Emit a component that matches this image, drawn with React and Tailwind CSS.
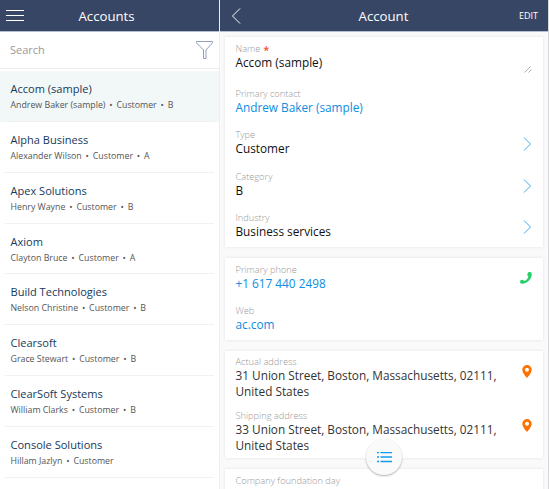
import React from "react";

const accounts = [
  ["Accom (sample)", "Andrew Baker (sample)", "Customer", "B"],
  ["Alpha Business", "Alexander Wilson", "Customer", "A"],
  ["Apex Solutions", "Henry Wayne", "Customer", "B"],
  ["Axiom", "Clayton Bruce", "Customer", "A"],
  ["Build Technologies", "Nelson Christine", "Customer", "B"],
  ["Clearsoft", "Grace Stewart", "Customer", "B"],
  ["ClearSoft Systems", "William Clarks", "Customer", "B"],
  ["Console Solutions", "Hillam Jazlyn", "Customer"],
];

function Chevron() {
  return (
    <svg className="h-[14px] w-[9px]" viewBox="0 0 9 14" fill="none" stroke="#43a9ee" strokeWidth="1">
      <path d="M1 .5 7.5 7 1 13.5" />
    </svg>
  );
}

function Pin() {
  return (
    <svg className="h-[13px] w-[10px]" viewBox="0 0 10 13" fill="#ff7200">
      <path fillRule="evenodd" d="M5 0a4.7 4.7 0 0 0-4.7 4.7C.3 8 5 13 5 13s4.7-5 4.7-8.3A4.7 4.7 0 0 0 5 0Zm0 2.7a2 2 0 1 1 0 4 2 2 0 0 1 0-4Z" />
    </svg>
  );
}

function Phone() {
  return (
    <svg className="h-[12px] w-[12px]" viewBox="0 0 12 12" fill="#27cf68">
      <path d="M8.200.4C9.200-.1 11 0 11.400.6c.8 2.800-.2 6-2.600 8.200C6.500 11 3.800 12 1 11.600.1 11.300-.1 9.400.4 8.400c.8-.9 2.700-.8 3.400.1l.8.6C6.300 8.200 7.800 6.600 8.500 4.800L7.900 4.200C7.100 3.400 7.200 1.300 8.200.4Z" />
    </svg>
  );
}

function Resize() {
  return (
    <svg className="h-[7px] w-[8px]" viewBox="0 0 8 7" fill="none" stroke="#888" strokeWidth=".7">
      <path d="M.5 6.500 6.500.5M4.500 6.500 7.500 3.500" />
    </svg>
  );
}

function Field({ label, required, children, size, tone = "text-[#111]", icon, iconPos = "top-[9px]" }) {
  return (
    <div className={"relative shrink-0 pl-[10.500px] " + size}>
      <div className="flex h-[12px] whitespace-nowrap text-[9.250px] leading-[13px] font-light text-[#999]">
        {label}
        {required && <span className="ml-[3px] h-3 text-[11px] leading-[15px] font-semibold text-[#f05030]">*</span>}
      </div>
      <div className={"text-[11.800px] leading-4 " + tone}>{children}</div>
      {icon && <div className={"absolute right-[11px] flex " + iconPos}>{icon}</div>}
    </div>
  );
}

const card = "shrink-0 bg-white shadow-[0_0_3px_rgba(0,0,0,0.1)]";

export default function App() {
  return (
    <div className="flex h-[489px] w-[549px] overflow-hidden bg-white font-['Open_Sans',sans-serif]">
      <section className="flex w-[219px] shrink-0 flex-col">
        <header className="flex h-8 shrink-0 items-center border-b border-[#b6bed2] bg-[#384665] pl-[6px] text-white">
          <svg className="h-[11px] w-[18px]" viewBox="0 0 18 11" stroke="#fff" strokeWidth="1">
            <path d="M0 .5H18M0 5.500H18M0 10.500H18" />
          </svg>
          <h1 className="ml-[54.500px] text-[13.200px] leading-[18px] font-medium">Accounts</h1>
        </header>
        <div className="flex h-[37px] shrink-0 items-center justify-between border-b border-[#ececec] pr-[6px] pl-[10px]">
          <span className="text-[11px] text-[#999]">Search</span>
          <svg className="h-[18px] w-[17px]" viewBox="0 0 17 18" fill="none" stroke="#8f9fbb" strokeWidth="1">
            <path d="M.5.5h16v1.300L10 9v8.500H7.500V9L.5 1.800Z" strokeLinejoin="round" />
          </svg>
        </div>
        <div className="mt-[2px] flex flex-col">
          {accounts.map(([name, ...details], i) => (
            <div key={name} className={"h-[50.860px] shrink-0 px-[5px] " + (i === 0 ? "bg-[#f2f7f8]" : "")}>
              <div className="flex h-full flex-col border-b border-[#f1f1f1] pt-[10px] pl-[5.500px]">
                <div className="text-[11.050px] leading-4 text-[#153a5b]">{name}</div>
                <div className="flex text-[8.800px] leading-[16px] text-[#555]">
                  {details.map((detail, j) => (
                    <React.Fragment key={j}>
                      {j > 0 && <span className="w-[11px] text-center">•</span>}
                      <span>{detail}</span>
                    </React.Fragment>
                  ))}
                </div>
              </div>
            </div>
          ))}
        </div>
      </section>
      <section className="relative flex w-[330px] flex-col overflow-hidden border-r border-l border-r-[#d7d7d9] border-l-[#eee] bg-[#fafafa]">
        <header className="flex h-8 shrink-0 items-center justify-between border-b border-[#b6bed2] bg-[#384665] pr-[10px] pl-[11px] text-white">
          <svg className="h-4 w-[10px]" viewBox="0 0 10 16" fill="none" stroke="#fff" strokeWidth="1">
            <path d="M9 .5 1.500 8 9 15.500" />
          </svg>
          <h1 className="ml-[7px] text-[13.200px] leading-[18px] font-medium">Account</h1>
          <span className="text-[9px] font-medium">EDIT</span>
        </header>
        <div className="mt-[5px] flex flex-col gap-[11px] px-[5px]">
          <div className={card + " h-[210px] pt-[5px]"}>
            <Field label="Name" required size="h-[45px]" icon={<Resize />} iconPos="top-[24px]">Accom (sample)</Field>
            <Field label="Primary contact" size="h-[41px]" tone="text-[#0d8de3]">Andrew Baker (sample)</Field>
            <Field label="Type" size="h-[42px]" icon={<Chevron />}>Customer</Field>
            <Field label="Category" size="h-[41px]" icon={<Chevron />}>B</Field>
            <Field label="Industry" size="h-[36px]" icon={<Chevron />}>Business services</Field>
          </div>
          <div className={card + " h-[82px] pt-[5px]"}>
            <Field label="Primary phone" size="h-[41px]" tone="text-[#0d8de3]" icon={<Phone />}>+1 617 440 2498</Field>
            <Field label="Web" size="h-[36px]" tone="text-[#0d8de3]">ac.com</Field>
          </div>
          <div className={card + " h-[107px] pt-[4px]"}>
            <Field label="Actual address" size="h-[54px]" tone="text-[#333]" icon={<Pin />} iconPos="top-[10px]">31 Union Street, Boston, Massachusetts, 02111,<br />United States</Field>
            <Field label="Shipping address" size="h-[49px]" tone="text-[#333]" icon={<Pin />} iconPos="top-[10px]">33 Union Street, Boston, Massachusetts, 02111,<br />United States</Field>
          </div>
          <div className={card + " h-[40px] pt-[5px]"}>
            <Field label="Company foundation day" size="h-[30px]" />
          </div>
        </div>
        <button className="absolute top-[439px] left-[146px] flex size-9 items-center justify-center rounded-full bg-[#fafafa] shadow-[0_1px_2px_rgba(0,0,0,0.3)]">
          <svg className="h-[11px] w-[15px]" viewBox="0 0 15 11" stroke="#159af0" strokeWidth="1.300">
            <path d="M0 .5H2M3.500 .5H15M0 5H2M3.500 5H15M0 9.500H2M3.500 9.500H15" />
          </svg>
        </button>
      </section>
    </div>
  );
}
